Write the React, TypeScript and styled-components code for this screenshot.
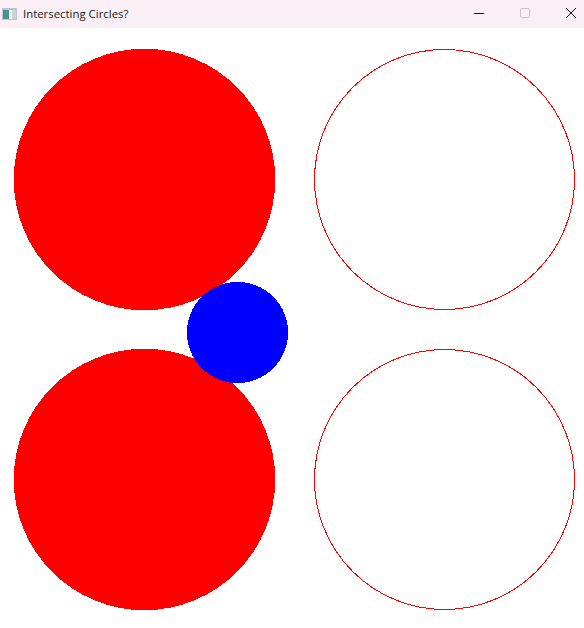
import React from "react";
import styled, { createGlobalStyle } from "styled-components";

const Global = createGlobalStyle`
  html, body { margin: 0; padding: 0; background: #ffffff; overflow: hidden; }
`;

const Window = styled.div`
  width: 584px;
  height: 628px;
  display: flex;
  flex-direction: column;
  background: #ffffff;
`;

const TitleBar = styled.header`
  height: 28px;
  flex: none;
  display: flex;
  align-items: center;
  padding-left: 2px;
  background: #f9eff5;
`;

const AppIcon = styled.svg`
  width: 15px;
  height: 12px;
  flex: none;
  margin-right: 6px;
`;

const Title = styled.span`
  flex: 1;
  font-family: "Open Sans", "Noto Sans", sans-serif;
  font-size: 11.4px;
  line-height: 16px;
  color: #1a1a1a;
`;

const WindowControls = styled.div`
  display: flex;
  align-items: center;
  gap: 20px;
  height: 100%;
`;

const WindowButton = styled.button`
  width: 26px;
  height: 100%;
  padding: 0 0 2px;
  border: 0;
  background: transparent;
  display: flex;
  align-items: center;
  justify-content: center;
`;

const Glyph = styled.svg`
  width: 10px;
  height: 10px;
  display: block;
`;

const Canvas = styled.svg`
  width: 584px;
  height: 600px;
  display: block;
  flex: none;
`;

const filled = [151.5, 451.5];
const outlined = [151.5, 451.5];

export default function App() {
  return (
    <Window>
      <Global />
      <TitleBar>
        <AppIcon viewBox="0 0 15 12">
          <rect x="0" y="0" width="15" height="12" fill="#b9c6d2" />
          <rect x="1" y="2" width="13" height="9" fill="#e8eff0" />
          <rect x="1" y="2" width="6" height="9" fill="#4c9090" />
          <rect x="7" y="2" width="3" height="9" fill="#f4f8f6" />
          <rect x="10" y="2" width="4" height="9" fill="#c6d6d6" />
        </AppIcon>
        <Title>Intersecting Circles?</Title>
        <WindowControls>
          <WindowButton aria-label="Minimize">
            <Glyph viewBox="0 0 10 10">
              <rect x="0" y="5" width="10" height="1" fill="#111111" />
            </Glyph>
          </WindowButton>
          <WindowButton aria-label="Maximize" disabled>
            <Glyph viewBox="0 0 10 10">
              <rect x="0.5" y="0.5" width="9" height="9" rx="1" fill="none" stroke="#c9c4c8" />
            </Glyph>
          </WindowButton>
          <WindowButton aria-label="Close">
            <Glyph viewBox="0 0 10 10">
              <path d="M0 0 L10 10 M10 0 L0 10" stroke="#111111" strokeWidth="1" fill="none" />
            </Glyph>
          </WindowButton>
        </WindowControls>
      </TitleBar>
      <Canvas viewBox="0 0 584 600" shapeRendering="crispEdges">
        {filled.map((cy) => (
          <circle key={cy} cx="144.5" cy={cy} r="130.7" fill="#ff0000" />
        ))}
        {outlined.map((cy) => (
          <circle key={cy} cx="444.5" cy={cy} r="130" fill="none" stroke="#ff0000" strokeWidth="1" />
        ))}
        <circle cx="237.5" cy="304.5" r="50.6" fill="#0000ff" />
      </Canvas>
    </Window>
  );
}
